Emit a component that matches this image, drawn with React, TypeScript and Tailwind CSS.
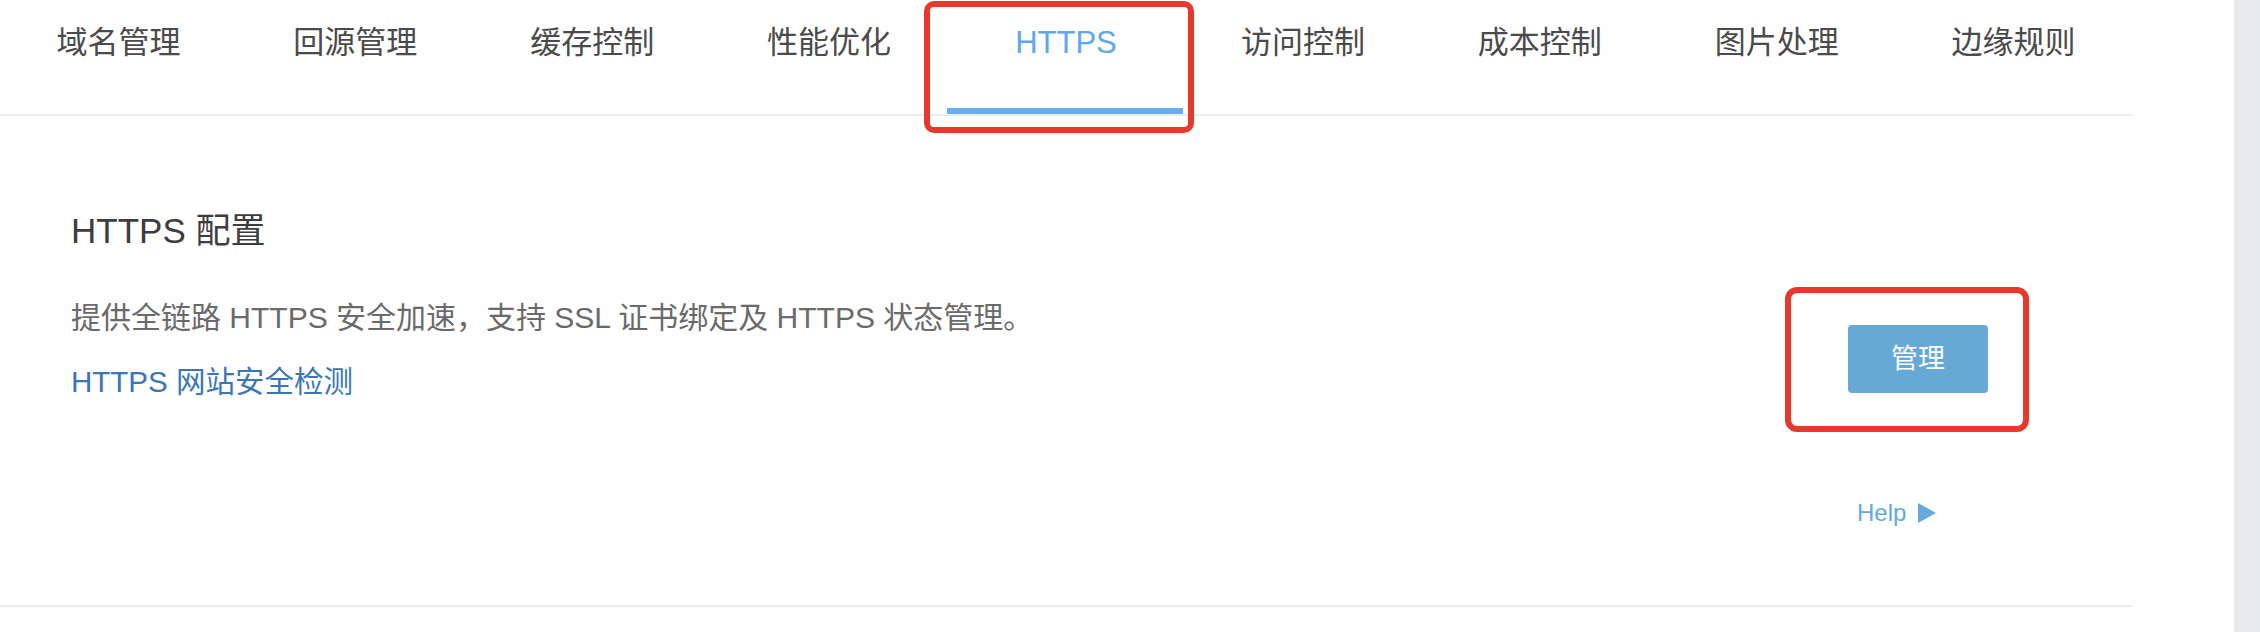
import React from "react";

const tabs = ["域名管理", "回源管理", "缓存控制", "性能优化", "HTTPS", "访问控制", "成本控制", "图片处理", "边缘规则"];

export default function App() {
  return (
    <div
      className="relative flex h-[632px] w-full overflow-hidden bg-[#fefefe]"
      style={{ fontFamily: '"Liberation Sans", "Noto Sans CJK SC", sans-serif' }}
    >
      <div className="flex-1">
        <div className="w-[2132px]">
          {/* Tabs */}
          <div className="flex h-[116px] border-b-2 border-[#ebebf1]">
            {tabs.map((t) => {
              const active = t === "HTTPS";
              return (
                <div key={t} className="relative flex flex-1 justify-center pt-[23px]">
                  <span
                    className={
                      "text-[31px] leading-[40px] " +
                      (active ? "text-[#5ea8e9]" : "text-[#4a4a4a]")
                    }
                  >
                    {t}
                  </span>
                  {active && (
                    <div className="absolute bottom-0 left-[-1px] right-[1px] h-[6px] bg-[#6aafe9]" />
                  )}
                </div>
              );
            })}
          </div>

          {/* Section */}
          <div className="flex h-[491px] border-b-2 border-[#ebebf1]">
            <div className="flex-1 pl-[71px] pt-[93px]">
              <h2 className="text-[35px] leading-[44px] text-[#3d3d3d]">HTTPS 配置</h2>
              <p className="mt-[45px] text-[30px] leading-[40px] text-[#6a6a6a]">
                提供全链路 HTTPS 安全加速，支持 SSL 证书绑定及 HTTPS 状态管理。
              </p>
              <a className="mt-[24px] block text-[29.5px] leading-[40px] text-[#3b75b6]">
                HTTPS 网站安全检测
              </a>
            </div>
            <div className="flex w-[284px] flex-col items-start pt-[209px]">
              <button className="flex h-[68px] w-[140px] items-center justify-center rounded-[4px] bg-[#66a9d7] text-[27px] text-white">
                管理
              </button>
              <div className="ml-[9px] mt-[105px] flex items-center gap-[12px] text-[24px] leading-[30px] text-[#68a8da]">
                <span>Help</span>
                <svg width="18" height="20" viewBox="0 0 18 20" className="block">
                  <polygon points="0,0 18,10 0,20" fill="#68a8da" />
                </svg>
              </div>
            </div>
          </div>
        </div>
      </div>
      <div className="w-[26px] bg-[#e9eaee]" />

      {/* Annotation boxes */}
      <div className="pointer-events-none absolute left-[924px] top-[1px] h-[132px] w-[270px] rounded-[10px] border-[6px] border-[#e6392b]" />
      <div className="pointer-events-none absolute left-[1785px] top-[287px] h-[145px] w-[244px] rounded-[12px] border-[6px] border-[#e6392b]" />
    </div>
  );
}
